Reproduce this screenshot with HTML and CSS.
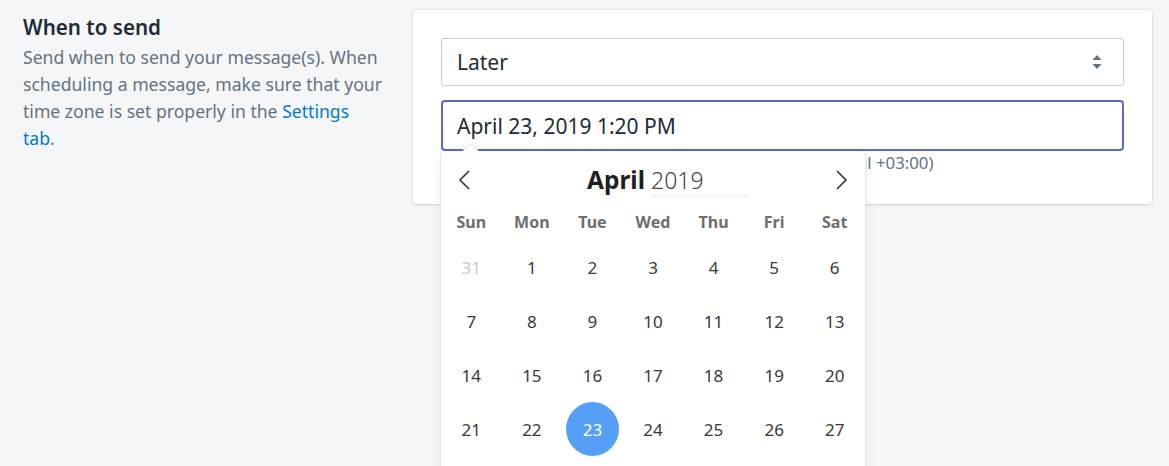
FILE: index.html
```html
<!DOCTYPE html>
<html lang="en">
<head>
<meta charset="utf-8">
<title>When to send</title>
<link rel="stylesheet" href="styles.css">
</head>
<body>
<div class="page">
  <section class="layout">
    <div class="annotation">
      <h2 class="heading">When to send</h2>
      <p class="desc">Send when to send your message(s). When scheduling a message, make sure that your time zone is set properly in the <a class="link" href="#">Settings tab</a>.</p>
    </div>
    <div class="card">
      <div class="select">
        <span class="select-value">Later</span>
        <svg class="select-arrows" width="10" height="14" viewBox="0 0 10 14"><path d="M5 0 L9.5 5 H0.5 Z M5 14 L9.5 9 H0.5 Z" fill="#637381"/></svg>
      </div>
      <div class="datefield">
        <div class="input">April 23, 2019 1:20 PM</div>
        <div class="popup">
          <span class="popup-arrow"></span>
          <div class="cal-head">
            <svg class="nav" width="14" height="20" viewBox="0 0 14 20"><path d="M12 1 L3 10 L12 19" fill="none" stroke="#333" stroke-width="1.6"/></svg>
            <div class="cal-title"><span class="cal-month">April</span><span class="cal-year">2019</span></div>
            <svg class="nav" width="14" height="20" viewBox="0 0 14 20"><path d="M2 1 L11 10 L2 19" fill="none" stroke="#333" stroke-width="1.6"/></svg>
          </div>
          <div class="cal-grid">
            <span class="wd">Sun</span><span class="wd">Mon</span><span class="wd">Tue</span><span class="wd">Wed</span><span class="wd">Thu</span><span class="wd">Fri</span><span class="wd">Sat</span>
            <span class="day muted">31</span><span class="day">1</span><span class="day">2</span><span class="day">3</span><span class="day">4</span><span class="day">5</span><span class="day">6</span>
            <span class="day">7</span><span class="day">8</span><span class="day">9</span><span class="day">10</span><span class="day">11</span><span class="day">12</span><span class="day">13</span>
            <span class="day">14</span><span class="day">15</span><span class="day">16</span><span class="day">17</span><span class="day">18</span><span class="day">19</span><span class="day">20</span>
            <span class="day">21</span><span class="day">22</span><span class="day selected">23</span><span class="day">24</span><span class="day">25</span><span class="day">26</span><span class="day">27</span>
          </div>
        </div>
      </div>
      <p class="hint">Messages are scheduled in time zone (Europe/Istanbul +03:00)</p>
    </div>
  </section>
</div>
</body>
</html>
```

FILE: styles.css
```css
html, body {
  margin: 0;
  padding: 0;
  background: #f4f6f8;
  height: 100%;
  overflow: hidden;
}

body {
  font-family: "Noto Sans", "Open Sans", sans-serif;
  color: #212b36;
}

.page {
  padding: 10px 17px 0 23px;
}

.layout {
  display: flex;
  align-items: flex-start;
  gap: 29px;
}

.annotation {
  width: 361px;
  flex: none;
  padding-top: 4px;
}

.heading {
  margin: 0;
  font-size: 20.6px;
  font-weight: 600;
  line-height: 27px;
  color: #212b36;
}

.desc {
  margin: 3px 0 0;
  font-size: 17.6px;
  line-height: 27px;
  color: #637381;
}

.link {
  color: #007ace;
  text-decoration: none;
}

.card {
  flex: 1;
  background: #fff;
  border-radius: 4px;
  box-shadow: 0 0 0 1px rgba(63, 63, 68, 0.05), 0 1px 3px 0 rgba(63, 63, 68, 0.15);
  padding: 28px 28px 29px 28px;
}

.select {
  height: 48px;
  box-sizing: border-box;
  border: 1px solid #c4cdd5;
  border-radius: 3px;
  display: flex;
  align-items: center;
  justify-content: space-between;
  padding: 0 21px 0 15px;
  font-size: 21px;
}

.datefield {
  position: relative;
  margin-top: 14px;
}

.input {
  height: 51px;
  box-sizing: border-box;
  border: 2px solid #5c6ac4;
  border-radius: 4px;
  display: flex;
  align-items: center;
  padding: 0 14px;
  font-size: 21px;
  color: #212b36;
}

.hint {
  margin: 0;
  font-size: 16.8px;
  line-height: 24px;
  color: #637381;
}

.popup {
  position: absolute;
  top: 100%;
  left: 0;
  width: 424px;
  padding-bottom: 40px;
  background: #fff;
  border-radius: 5px;
  box-shadow: 1px 0 0 #e6e6e6, -1px 0 0 #e6e6e6, 0 3px 13px rgba(0, 0, 0, 0.08);
  z-index: 5;
}

.popup-arrow {
  position: absolute;
  top: -6px;
  left: 24px;
  width: 10px;
  height: 10px;
  background: #fff;
  transform: rotate(45deg);
  border-left: 1px solid #e6e6e6;
  border-top: 1px solid #e6e6e6;
}

.cal-head {
  height: 53px;
  display: flex;
  align-items: center;
  justify-content: space-between;
  padding: 0 16px;
}

.nav {
  display: block;
  margin-top: 4px;
}

.cal-title {
  display: flex;
  align-items: baseline;
  margin-left: 30px;
  margin-top: 4px;
}

.cal-month {
  font-size: 24.5px;
  font-weight: 700;
  color: #1f1f1f;
}

.cal-year {
  font-size: 23px;
  font-weight: 300;
  color: #444;
  width: 98px;
  margin-left: 6px;
  border-bottom: 1px solid #eee;
  line-height: 30px;
}

.cal-grid {
  display: grid;
  grid-template-columns: repeat(7, 1fr);
  grid-auto-rows: 54px;
  grid-template-rows: 36px;
}

.wd {
  display: flex;
  align-items: center;
  justify-content: center;
  font-size: 16px;
  font-weight: 700;
  color: #6e6e6e;
}

.day {
  display: flex;
  align-items: center;
  justify-content: center;
  font-size: 17px;
  color: #393939;
  margin: 0 3.75px;
  border-radius: 50%;
}

.day.muted {
  color: #c8c8c8;
}

.day.selected {
  background: #569ff7;
  color: #fff;
}
```
